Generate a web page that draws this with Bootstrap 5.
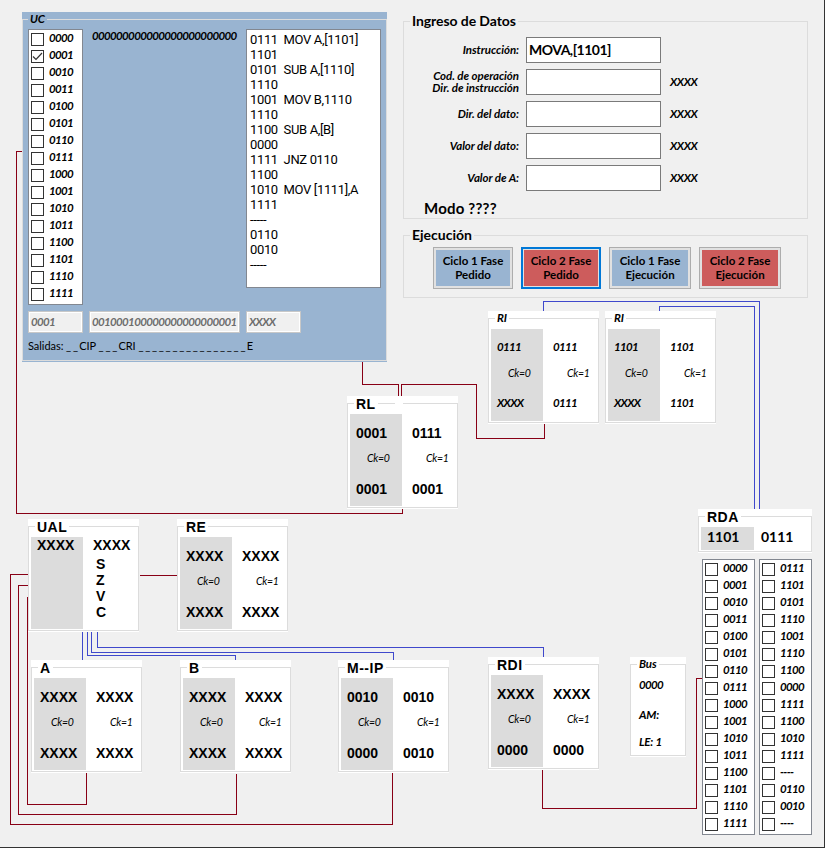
<!DOCTYPE html>
<html lang="es">
<head>
<meta charset="utf-8">
<meta name="viewport" content="width=device-width, initial-scale=1">
<title>Simulador</title>
<link href="https://cdn.jsdelivr.net/npm/bootstrap@5.3.0/dist/css/bootstrap.min.css" rel="stylesheet">
<style>
body{background:#f0f0f0;color:#000;font-family:Lato,"Open Sans",sans-serif;overflow:hidden}
.window{width:825px;height:848px;border-right:1px solid #333;border-bottom:1px solid #333}
.topbar{padding:12px 0 0 22px;gap:16px}
/* group box: caption sits over the frame's top edge */
.gbox{--gb:#fff;background:var(--gb);padding:7px 0 1px}
.gframe{border:1px solid #dcdcdc;height:100%}
.gcap{width:max-content;margin:-8px 0 0 6px;height:16px;line-height:16px;padding:0 2px;background:var(--gb);white-space:nowrap}
.cal{font:italic 700 11.5px/16px Lato,sans-serif;letter-spacing:-.65px;white-space:nowrap}
.gcap.cal{line-height:14px;letter-spacing:-.1px}
.gcap.ari{letter-spacing:.5px}
.ari{font:700 14px/16px "Liberation Sans",Arial,sans-serif;white-space:nowrap}
.big{font:700 14px/16px Lato,sans-serif;white-space:nowrap}
.gcap.big{line-height:14px}
.uc{--gb:#99b4d1;width:365px;height:350px;flex:none}
.uc .gframe{padding:0 5px}
.uc-main{margin-top:1px;gap:6px}
.check-list{width:55px;height:276px;border:1px solid #828790;background:#fff;padding:1px 2px;list-style:none;margin:0}
.check-list li{height:17px;display:flex;gap:5px}
.check-list i{width:13px;height:13px;border:1px solid #333;margin-top:2px;flex:none;display:block}
.check-list i svg{display:block;width:11px;height:11px}
.check-list span{height:15px;line-height:14px}
.micro{width:151px;padding:0 3px;line-height:14px}
.source{width:135px;height:259px;border:1px solid #828790;background:#fff;font:13px/15px Roboto,sans-serif;letter-spacing:-.35px;padding:2px 3px;margin:0;white-space:pre;overflow:hidden}
.outs{margin-top:6px;gap:6px}
.outs input{height:22px;border:1px solid #c8c8c8;box-shadow:inset 0 0 0 1px #fff;background:#f0f0f0;color:#6d6d6d;padding:0 2px 2px;border-radius:0}
.w55{width:55px}.w151{width:151px}
.salidas{font:11px/14px Lato,sans-serif;letter-spacing:-.05px;margin-top:6px;white-space:pre}
.salidas b{font-weight:400;letter-spacing:1.75px;margin-right:-.5px}
.side{width:405px;margin-top:2px;flex:none}
.plain{--gb:#f0f0f0}
.g-in{height:206px}
.g-in .big{letter-spacing:-.08px}
.g-ex{height:71px;margin-top:8px}
.frow{height:26px;margin-bottom:6px;display:grid;grid-template-columns:115px 135px 60px;column-gap:7px;align-items:center}
.frow label{text-align:right;line-height:12px}
.frow input{height:26px;border:1px solid #7a7a7a;background:#fff;padding:0 2px 2px;border-radius:0;width:135px}
.frow input.big{letter-spacing:-.5px}
.frow .cal{letter-spacing:-.05px}
.frow span.cal{margin-left:2px;letter-spacing:-.4px}
.fields{margin-top:7px}
.g-in .modo{margin:9px 0 0 20px;font-size:15px;letter-spacing:.2px}
.cycle{height:42px;width:80px;border:1px solid #adadad;border-radius:0;padding:0 0 1px;font:700 11.5px/14px Lato,sans-serif;color:#000;background:#99b4d1;box-shadow:inset 0 0 0 2px #e1e1e1}
.cycle.wide{width:82px}
.cycle.hot{background:#cd5c5c}
.cycle.sel{border:2px solid #0078d7;box-shadow:inset 0 0 0 1px #e1e1e1}
.cycles{margin:3px 0 0 29px;gap:8px}
/* diagram nodes */
.node{position:absolute;width:111px;height:113px}
.wires{position:absolute;left:0;top:0;pointer-events:none}
.nbody{margin:2px 0 0 2px;height:92px}
.c0{width:52px;background:#dcdcdc;padding-left:6px}
.c1{padding-left:10px}
.regs .c0,.regs .c1{padding-top:11px}
.ck{font:italic 400 10.5px/16px Lato,sans-serif;margin:9px 0 15px 11px;white-space:nowrap;letter-spacing:-.3px}
.c1 .ck{margin-left:14px}
.slim .c0,.slim .c1{padding-top:10px}
.slim .ck{margin:10px 0 14px 11px}
.slim .c1 .ck{margin-left:14px}
#rl{left:347px;top:396px}#ri1{left:488px;top:311px}#ri2{left:605px;top:311px}
#ual{left:28px;top:519px}#re{left:177px;top:519px}#ra{left:31px;top:660px}#rb{left:180px;top:660px}
#mip{left:338px;top:660px}#rdi{left:488px;top:657px}
#bus{left:630px;top:657px;width:56px;height:100px}
#rda{left:698px;top:509px;width:114px;height:44px}
#rda .nbody{height:23px}
#rda .c0{width:53px;padding-top:2px}#rda .c1{padding:2px 0 0 7px}
#mem{position:absolute;left:702px;top:559px;gap:4px}
#mem .check-list{width:53px}
.notch{position:absolute;left:48px;top:7px;width:8px;height:1px;background:#fff}
.flags{margin:3px 0 0 3px}
.bus-body{padding:4px 0 0 8px}
.am{margin-top:14px;letter-spacing:-.2px}
.le{margin-top:11px;letter-spacing:-.2px}
</style>
<script src="https://cdn.jsdelivr.net/npm/bootstrap@5.3.0/dist/js/bootstrap.bundle.min.js"></script>
</head>
<body>
<div class="window position-relative overflow-hidden">
<svg class="wires" width="825" height="848" fill="none" shape-rendering="crispEdges">
<g stroke="#880015">
<path d="M22 151.500H16.500V513.500H402.500V508"/>
<path d="M362.500 362V384.500H398.500V396"/>
<path d="M401.500 396V384.500H476.500V438.500H544.500V423"/>
<path d="M29 574.500H10.500V824.500H392.500V771"/>
<path d="M29 585.500H18.500V814.500H236.500V774"/>
<path d="M29 597.500H27.500V804.500H86.500V773"/>
<path d="M140 575.500H177"/>
<path d="M542.500 769V808.500H696.500V678.500H702"/>
</g>
<g stroke="#3f48cc">
<path d="M543.500 311V301.500H759.500V509"/>
<path d="M659.500 311V306.500H754.500V509"/>
<path d="M82.500 632V660"/>
<path d="M87.500 632V655.500H235.500V660"/>
<path d="M91.500 632V652.500H393.500V660"/>
<path d="M97.500 632V647.500H543.500V657"/>
</g>
</svg>

<div class="topbar d-flex align-items-start">
  <section class="gbox uc">
    <div class="gframe">
      <div class="gcap cal ms-0">UC</div>
      <div class="uc-main d-flex align-items-start">
        <ul class="check-list cal" data-items="0000 0001* 0010 0011 0100 0101 0110 0111 1000 1001 1010 1011 1100 1101 1110 1111"></ul>
        <div class="micro cal">000000000000000000000000</div>
<pre class="source">0111  MOV A,[1101]
1101
0101  SUB A,[1110]
1110
1001  MOV B,1110
1110
1100  SUB A,[B]
0000
1111  JNZ 0110
1100
1010  MOV [1111],A
1111
-----
0110
0010
-----</pre>
      </div>
      <div class="outs d-flex">
        <input class="cal w55" value="0001" disabled>
        <input class="cal w151" value="001000100000000000000001" disabled>
        <input class="cal w55" value="XXXX" disabled>
      </div>
      <div class="salidas">Salidas: <b>__</b>CIP <b>___</b>CRI <b>________________</b>E</div>
    </div>
  </section>

  <div class="side">
    <section class="gbox plain g-in">
      <div class="gframe">
        <div class="gcap big">Ingreso de Datos</div>
        <div class="fields">
          <div class="frow"><label class="cal">Instrucción:</label><input class="big" value="MOVA,[1101]"></div>
          <div class="frow"><label class="cal">Cod. de operación<br>Dir. de instrucción</label><input class="big"><span class="cal">XXXX</span></div>
          <div class="frow"><label class="cal">Dir. del dato:</label><input class="big"><span class="cal">XXXX</span></div>
          <div class="frow"><label class="cal">Valor del dato:</label><input class="big"><span class="cal">XXXX</span></div>
          <div class="frow"><label class="cal">Valor de A:</label><input class="big"><span class="cal">XXXX</span></div>
        </div>
        <div class="big modo">Modo ????</div>
      </div>
    </section>
    <section class="gbox plain g-ex">
      <div class="gframe">
        <div class="gcap big">Ejecución</div>
        <div class="cycles d-flex">
          <button class="btn cycle">Ciclo 1 Fase<br>Pedido</button>
          <button class="btn cycle hot sel">Ciclo 2 Fase<br>Pedido</button>
          <button class="btn cycle wide">Ciclo 1 Fase<br>Ejecución</button>
          <button class="btn cycle wide hot">Ciclo 2 Fase<br>Ejecución</button>
        </div>
      </div>
    </section>
  </div>
</div>

<section id="ri1" class="gbox node slim"><div class="gframe"><div class="gcap cal">RI</div>
  <div class="nbody regs d-flex"><div class="c0"><div class="cal">0111</div><div class="ck">Ck=0</div><div class="cal">XXXX</div></div><div class="c1"><div class="cal">0111</div><div class="ck">Ck=1</div><div class="cal">0111</div></div></div></div></section>
<section id="ri2" class="gbox node slim"><div class="gframe"><div class="gcap cal">RI</div>
  <div class="nbody regs d-flex"><div class="c0"><div class="cal">1101</div><div class="ck">Ck=0</div><div class="cal">XXXX</div></div><div class="c1"><div class="cal">1101</div><div class="ck">Ck=1</div><div class="cal">1101</div></div></div></div></section>
<section id="rl" class="gbox node"><div class="gframe"><div class="gcap ari">RL</div>
  <div class="nbody regs d-flex"><div class="c0"><div class="ari">0001</div><div class="ck">Ck=0</div><div class="ari">0001</div></div><div class="c1"><div class="ari">0111</div><div class="ck">Ck=1</div><div class="ari">0001</div></div></div></div><div class="notch"></div></section>
<section id="ual" class="gbox node"><div class="gframe"><div class="gcap ari">UAL</div>
  <div class="nbody d-flex"><div class="c0"><div class="ari">XXXX</div></div><div class="c1"><div class="ari">XXXX</div><div class="flags ari"><div>S</div><div>Z</div><div>V</div><div>C</div></div></div></div></div></section>
<section id="re" class="gbox node"><div class="gframe"><div class="gcap ari">RE</div>
  <div class="nbody regs d-flex"><div class="c0"><div class="ari">XXXX</div><div class="ck">Ck=0</div><div class="ari">XXXX</div></div><div class="c1"><div class="ari">XXXX</div><div class="ck">Ck=1</div><div class="ari">XXXX</div></div></div></div></section>
<section id="ra" class="gbox node"><div class="gframe"><div class="gcap ari">A</div>
  <div class="nbody regs d-flex"><div class="c0"><div class="ari">XXXX</div><div class="ck">Ck=0</div><div class="ari">XXXX</div></div><div class="c1"><div class="ari">XXXX</div><div class="ck">Ck=1</div><div class="ari">XXXX</div></div></div></div></section>
<section id="rb" class="gbox node"><div class="gframe"><div class="gcap ari">B</div>
  <div class="nbody regs d-flex"><div class="c0"><div class="ari">XXXX</div><div class="ck">Ck=0</div><div class="ari">XXXX</div></div><div class="c1"><div class="ari">XXXX</div><div class="ck">Ck=1</div><div class="ari">XXXX</div></div></div></div></section>
<section id="mip" class="gbox node"><div class="gframe"><div class="gcap ari">M--IP</div>
  <div class="nbody regs d-flex"><div class="c0"><div class="ari">0010</div><div class="ck">Ck=0</div><div class="ari">0000</div></div><div class="c1"><div class="ari">0010</div><div class="ck">Ck=1</div><div class="ari">0010</div></div></div></div></section>
<section id="rdi" class="gbox node"><div class="gframe"><div class="gcap ari">RDI</div>
  <div class="nbody regs d-flex"><div class="c0"><div class="ari">XXXX</div><div class="ck">Ck=0</div><div class="ari">0000</div></div><div class="c1"><div class="ari">XXXX</div><div class="ck">Ck=1</div><div class="ari">0000</div></div></div></div></section>
<section id="bus" class="gbox node"><div class="gframe"><div class="gcap cal">Bus</div>
  <div class="bus-body"><div class="cal">0000</div><div class="cal am">AM:</div><div class="cal le">LE: 1</div></div></div></section>
<section id="rda" class="gbox node"><div class="gframe"><div class="gcap ari">RDA</div>
  <div class="nbody d-flex"><div class="c0"><div class="big">1101</div></div><div class="c1"><div class="big">0111</div></div></div></div></section>
<div id="mem" class="d-flex">
  <ul class="check-list cal" data-items="0000 0001 0010 0011 0100 0101 0110 0111 1000 1001 1010 1011 1100 1101 1110 1111"></ul>
  <ul class="check-list cal" data-items="0111 1101 0101 1110 1001 1110 1100 0000 1111 1100 1010 1111 ---- 0110 0010 ----"></ul>
</div>
</div>
<script>
document.querySelectorAll('.check-list').forEach(function(ul){
  ul.innerHTML = ul.dataset.items.split(' ').map(function(t){
    var on = t.endsWith('*');
    return '<li><i>' + (on ? '<svg viewBox="0 0 11 11"><path d="M1 5.500L4 8.500L10 2" fill="none" stroke="#333" stroke-width="1.200"/></svg>' : '') + '</i><span>' + t.replace('*','') + '</span></li>';
  }).join('');
});
</script>
</body>
</html>
